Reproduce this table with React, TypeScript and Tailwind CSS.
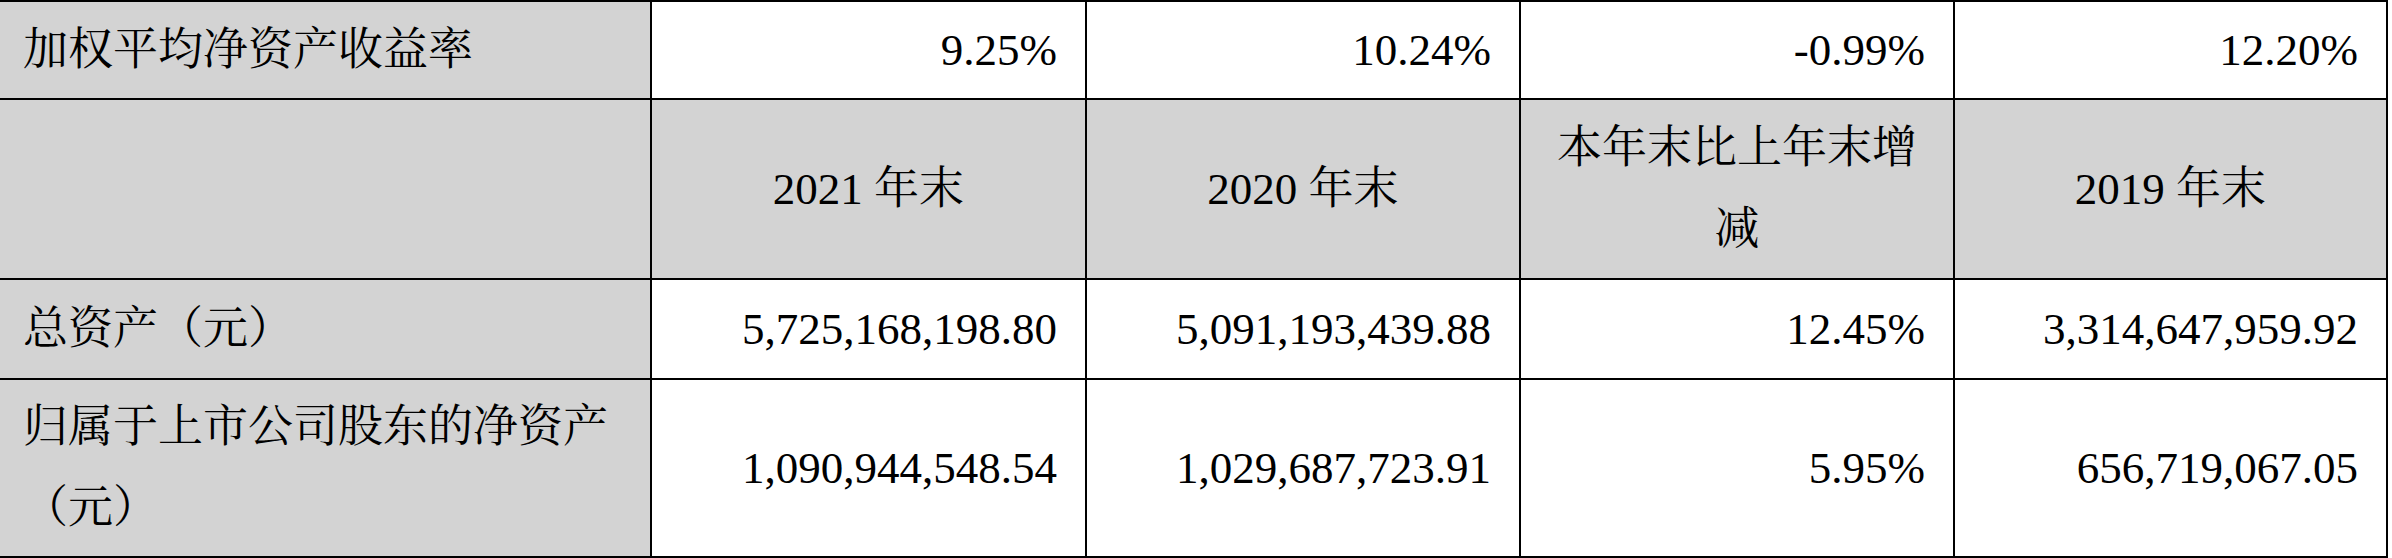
import React from "react";

const font = {
  fontFamily:
    '"Liberation Serif", "Noto Serif CJK SC", "Noto Sans CJK SC", serif',
};

interface Row {
  label: string;
  values: string[];
  header?: boolean;
}

const rows: Row[] = [
  { label: "加权平均净资产收益率", values: ["9.25%", "10.24%", "-0.99%", "12.20%"] },
  { label: "", values: ["2021 年末", "2020 年末", "本年末比上年末增减", "2019 年末"], header: true },
  { label: "总资产（元）", values: ["5,725,168,198.80", "5,091,193,439.88", "12.45%", "3,314,647,959.92"] },
  {
    label: "归属于上市公司股东的净资产（元）",
    values: ["1,090,944,548.54", "1,029,687,723.91", "5.95%", "656,719,067.05"],
  },
];

export default function App() {
  return (
    <div className="w-[2392px] h-[558px] bg-white overflow-hidden" style={font}>
      <div className="w-[2388px] bg-black pt-[2px] pr-[2px] pb-[2px] grid grid-cols-[650px_433px_432px_432px_431px] grid-rows-[96px_178px_98px_176px] gap-[2px] text-[45px] leading-[81px] text-black">
        {rows.map((row, i) => (
          <React.Fragment key={i}>
            <div className="bg-[#d3d3d3] flex items-center pl-[23px] pr-[27px]">
              <span>{row.label}</span>
            </div>
            {row.values.map((v, j) =>
              row.header ? (
                <div key={j} className="bg-[#d3d3d3] flex items-center justify-center px-[27px] text-center">
                  <span>{v}</span>
                </div>
              ) : (
                <div key={j} className="bg-white flex items-center justify-end pr-[28px]">
                  <span>{v}</span>
                </div>
              )
            )}
          </React.Fragment>
        ))}
      </div>
    </div>
  );
}
